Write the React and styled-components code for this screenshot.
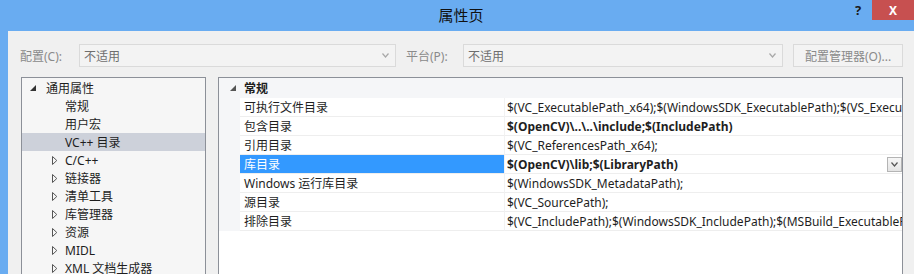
import React from "react";
import styled, {createGlobalStyle} from "styled-components";

const GlobalStyle = createGlobalStyle`
  html, body {
    margin: 0;
    padding: 0;
  }
  body {
    width: 914px;
    height: 274px;
    overflow: hidden;
    background: #f0f0f0;
    font-family: "Noto Sans", "Noto Sans CJK SC", sans-serif;
    font-size: 12px;
    color: #1e1e1e;
  }
`

const Window = styled.div`
  width: 914px;
  height: 274px;
  display: flex;
  flex-direction: column;
  background: #69acf1;
  overflow: hidden;
`

const TitleBar = styled.div`
  height: 31px;
  flex-shrink: 0;
  display: grid;
  grid-template-columns: 1fr auto 1fr;
  align-items: start;
`

const Title = styled.div`
  grid-column: 2;
  padding-left: 8px;
  line-height: 30px;
  font-size: 15px;
  color: #111;
  font-family: "Noto Sans CJK SC", sans-serif;
`

const Caption = styled.div`
  justify-self: end;
  display: flex;
`

const HelpButton = styled.div`
  width: 28px;
  height: 20px;
  display: flex;
  align-items: center;
  justify-content: center;
  font-weight: bold;
  font-size: 13px;
  color: #1a1a1a;
`

const CloseButton = styled.div`
  width: 42px;
  height: 20px;
  display: flex;
  align-items: center;
  justify-content: center;
  background: #c75050;
  color: #fff;
  font-weight: bold;
  font-size: 12px;
`

const Body = styled.div`
  flex: 1;
  min-height: 0;
  margin-left: 8px;
  background: #f0f0f0;
  padding: 13px 11px 0 12px;
  display: flex;
  flex-direction: column;
`

const Toolbar = styled.div`
  display: flex;
  align-items: center;
  height: 23px;
  flex-shrink: 0;
`

const Label = styled.div`
  width: ${p => p.width}px;
  margin-left: ${p => p.offset || 0}px;
  color: #8a8a8a;
  white-space: nowrap;
`

const Combo = styled.div`
  width: ${p => p.width}px;
  height: 23px;
  box-sizing: border-box;
  border: 1px solid #dadada;
  background: #f3f3f3;
  display: flex;
  align-items: center;
  justify-content: space-between;
  padding: 0 6px 0 4px;
  color: #6e6e6e;
`

const Button = styled.div`
  width: 110px;
  height: 23px;
  margin-left: 10px;
  box-sizing: border-box;
  border: 1px solid #dadada;
  background: #f3f3f3;
  color: #8a8a8a;
  display: flex;
  align-items: center;
  justify-content: center;
  white-space: nowrap;
`

const Panels = styled.div`
  display: flex;
  gap: 12px;
  margin: 10px 0 0 1px;
  height: 220px;
  flex-shrink: 0;
`

const TreePanel = styled.div`
  width: 185px;
  box-sizing: border-box;
  border: 1px solid #8c9098;
  background: #f6f6f6;
  padding-top: 1px;
`

const TreeRow = styled.div`
  height: 18px;
  display: flex;
  align-items: center;
  padding-left: ${p => 8 + p.depth * 22}px;
  background: ${p => (p.selected ? "#cdd1da" : "transparent")};
  white-space: nowrap;
`

const Expander = styled.div`
  width: ${p => (p.depth ? 13 : 16)}px;
  display: flex;
  align-items: center;
`

const GridPanel = styled.div`
  flex: 1;
  box-sizing: border-box;
  border: 1px solid #8c9098;
  background: #fff;
  overflow: hidden;
`

const Category = styled.div`
  height: 20px;
  display: flex;
  align-items: center;
  background: #f5f6f8;
  padding-left: 11px;
  font-weight: bold;
  gap: 8px;
`

const PropRow = styled.div`
  display: grid;
  grid-template-columns: 21px 265px 1fr;
  height: 19px;
`

const Gutter = styled.div`
  background: #f5f6f8;
`

const NameCell = styled.div`
  display: flex;
  align-items: center;
  padding-left: 4px;
  box-sizing: border-box;
  border-bottom: 1px solid #eeeeee;
  border-right: 1px solid #f2f2f2;
  background: ${p => (p.selected ? "#3399ff" : "#fff")};
  color: ${p => (p.selected ? "#fff" : "#1e1e1e")};
  white-space: nowrap;
`

const ValueCell = styled.div`
  display: flex;
  align-items: center;
  justify-content: space-between;
  padding-left: 2px;
  box-sizing: border-box;
  border-bottom: 1px solid #eeeeee;
  font-weight: ${p => (p.bold ? "bold" : "normal")};
  white-space: nowrap;
  overflow: hidden;
  min-width: 0;
`

const ValueText = styled.span`
  overflow: hidden;
`

const DropButton = styled.div`
  width: 15px;
  height: 15px;
  flex-shrink: 0;
  box-sizing: border-box;
  border: 1px solid #b4b4b4;
  background: linear-gradient(#f6f6f6, #e4e4e4);
  display: flex;
  align-items: center;
  justify-content: center;
`

const Chevron = ({color = "#a8a8a8"}) => (
    <svg width="7" height="5" viewBox="0 0 7 5">
        <polyline points="0.5,0.5 3.5,4 6.5,0.5" fill="none" stroke={color} strokeWidth="1.2"/>
    </svg>
);

const Expanded = ({color = "#333"}) => (
    <svg width="6" height="6" viewBox="0 0 6 6">
        <polygon points="6,0 6,6 0,6" fill={color}/>
    </svg>
);

const Collapsed = () => (
    <svg width="6" height="9" viewBox="0 0 6 9">
        <polygon points="0.5,0.5 4.8,4.5 0.5,8.5" fill="none" stroke="#555" strokeWidth="1"/>
    </svg>
);

const tree = [
    {label: "通用属性", depth: 0, icon: "open"},
    {label: "常规", depth: 1},
    {label: "用户宏", depth: 1},
    {label: "VC++ 目录", depth: 1, selected: true},
    {label: "C/C++", depth: 1, icon: "closed"},
    {label: "链接器", depth: 1, icon: "closed"},
    {label: "清单工具", depth: 1, icon: "closed"},
    {label: "库管理器", depth: 1, icon: "closed"},
    {label: "资源", depth: 1, icon: "closed"},
    {label: "MIDL", depth: 1, icon: "closed"},
    {label: "XML 文档生成器", depth: 1, icon: "closed"},
];

const props = [
    {name: "可执行文件目录", value: "$(VC_ExecutablePath_x64);$(WindowsSDK_ExecutablePath);$(VS_ExecutablePath);$(MSBuild_ExecutablePath)"},
    {name: "包含目录", value: "$(OpenCV)\\..\\..\\include;$(IncludePath)", bold: true},
    {name: "引用目录", value: "$(VC_ReferencesPath_x64);"},
    {name: "库目录", value: "$(OpenCV)\\lib;$(LibraryPath)", bold: true, selected: true},
    {name: "Windows 运行库目录", value: "$(WindowsSDK_MetadataPath);"},
    {name: "源目录", value: "$(VC_SourcePath);"},
    {name: "排除目录", value: "$(VC_IncludePath);$(WindowsSDK_IncludePath);$(MSBuild_ExecutablePath);$(VC_LibraryPath_x64);"},
];

export default function App() {
    return (
        <Window>
            <GlobalStyle/>
            <TitleBar>
                <Title>属性页</Title>
                <Caption>
                    <HelpButton>?</HelpButton>
                    <CloseButton>X</CloseButton>
                </Caption>
            </TitleBar>
            <Body>
                <Toolbar>
                    <Label width={59}>配置(C):</Label>
                    <Combo width={317}>
                        <span>不适用</span>
                        <Chevron/>
                    </Combo>
                    <Label width={57} offset={10}>平台(P):</Label>
                    <Combo width={320}>
                        <span>不适用</span>
                        <Chevron/>
                    </Combo>
                    <Button>配置管理器(O)...</Button>
                </Toolbar>
                <Panels>
                    <TreePanel>
                        {tree.map(item => (
                            <TreeRow key={item.label} depth={item.depth} selected={item.selected}>
                                <Expander depth={item.depth}>
                                    {item.icon === "open" && <Expanded/>}
                                    {item.icon === "closed" && <Collapsed/>}
                                </Expander>
                                {item.label}
                            </TreeRow>
                        ))}
                    </TreePanel>
                    <GridPanel>
                        <Category>
                            <Expanded color="#555"/>
                            <span>常规</span>
                        </Category>
                        {props.map(p => (
                            <PropRow key={p.name}>
                                <Gutter/>
                                <NameCell selected={p.selected}>{p.name}</NameCell>
                                <ValueCell bold={p.bold}>
                                    <ValueText>{p.value}</ValueText>
                                    {p.selected && (
                                        <DropButton>
                                            <Chevron color="#555"/>
                                        </DropButton>
                                    )}
                                </ValueCell>
                            </PropRow>
                        ))}
                    </GridPanel>
                </Panels>
            </Body>
        </Window>
    );
}
